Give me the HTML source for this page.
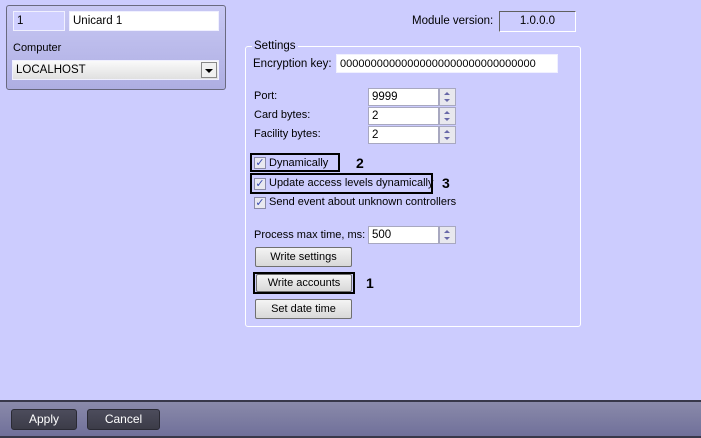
<!DOCTYPE html>
<html><head><style>
body{margin:0;width:701px;height:438px;background:#ccccfe;font-family:"Liberation Sans",sans-serif;font-size:11px;color:#000;position:relative;overflow:hidden}
div,span{position:absolute;box-sizing:border-box}
.t{white-space:nowrap}
.in{background:#fff;border:1px solid #a8a8c0;padding:0 3px;font-size:11.5px;white-space:nowrap;overflow:hidden;display:flex;align-items:center}
.spin{width:17px;background:#e8e8ee;border:1px solid #a8a8c0}
.spin:before{content:"";position:absolute;left:4px;top:3px;border:3px solid transparent;border-bottom:3px solid #6868a8;border-top:0}
.spin:after{content:"";position:absolute;left:4px;bottom:3px;border:3px solid transparent;border-top:3px solid #6868a8;border-bottom:0}
.btn{background:linear-gradient(#f4f4f4,#d8d8d8);border:1px solid #707070;border-radius:2px;text-align:center;font-size:11px;line-height:18px}
.cb{width:12px;height:12px;border:1px solid #8a8aa8;background:#e8e8f0;color:#3a4ab0;font-size:11px;line-height:10px;text-align:center}
.box{border:2px solid #000}
.num{font-size:14px;font-weight:bold}
.bb{background:linear-gradient(#4c4c5c,#3c3c48);color:#fff;border:1px solid #2a2a34;border-radius:3px;text-align:center;line-height:19px;font-size:12px}
</style></head><body>
<div style="left:6px;top:5px;width:220px;height:85px;border:1px solid #6a6a80;border-radius:3px;background:linear-gradient(#c8c8f4,#aeaee2)"></div>
<div class="in" style="left:13px;top:11px;width:52px;height:20px;background:#d0d0ff;border-color:#f0f0ff">1</div>
<div class="in" style="left:69px;top:11px;width:150px;height:20px;border-color:#f0f0ff">Unicard 1</div>
<span class="t" style="left:13px;top:42px">Computer</span>
<div class="in" style="left:12px;top:60px;width:207px;height:20px;background:linear-gradient(#fafafa,#e0e0e0);border-color:#f0f0ff">LOCALHOST</div>
<div style="left:201px;top:62px;width:16px;height:16px;background:#f0f0f0;border:1px solid #888"><span style="left:3px;top:6px;border:4px solid transparent;border-top:4px solid #000;border-bottom:0"></span></div>

<span class="t" style="left:412px;top:15px;font-size:11.5px">Module version:</span>
<div style="left:499px;top:11px;width:77px;height:21px;border:1px solid;border-color:#606060 #fff #fff #606060;text-align:center;line-height:19px;font-size:11.5px">1.0.0.0</div>

<div style="left:245px;top:46px;width:336px;height:281px;border:1px solid #fff;border-radius:3px"></div>
<span class="t" style="left:252px;top:40px;background:#ccccfe;padding:0 2px;font-size:11.5px">Settings</span>
<span class="t" style="left:253px;top:58px;font-size:11.5px">Encryption key:</span>
<div class="in" style="left:336px;top:54px;width:222px;height:19px;border-color:#f0f0ff;font-size:11px">00000000000000000000000000000000</div>
<span class="t" style="left:254px;top:90px">Port:</span>
<div class="in" style="left:368px;top:88px;width:71px;height:18px">9999</div><div class="spin" style="left:439px;top:88px;height:18px"></div>
<span class="t" style="left:254px;top:109px">Card bytes:</span>
<div class="in" style="left:368px;top:107px;width:71px;height:18px">2</div><div class="spin" style="left:439px;top:107px;height:18px"></div>
<span class="t" style="left:254px;top:128px">Facility bytes:</span>
<div class="in" style="left:368px;top:126px;width:71px;height:18px">2</div><div class="spin" style="left:439px;top:126px;height:18px"></div>

<div class="box" style="left:250px;top:153px;width:90px;height:19px"></div>
<div class="cb" style="left:254px;top:157px">✓</div><span class="t" style="left:269px;top:157px">Dynamically</span>
<span class="num" style="left:356px;top:155px">2</span>
<div class="box" style="left:250px;top:173px;width:183px;height:21px"></div>
<div class="cb" style="left:254px;top:178px">✓</div><span class="t" style="left:269px;top:177px;font-size:11px">Update access levels dynamically</span>
<span class="num" style="left:442px;top:175px">3</span>
<div class="cb" style="left:254px;top:197px">✓</div><span class="t" style="left:269px;top:196px;font-size:11px">Send event about unknown controllers</span>

<span class="t" style="left:254px;top:229px;font-size:11px">Process max time, ms:</span>
<div class="in" style="left:368px;top:226px;width:71px;height:18px">500</div><div class="spin" style="left:439px;top:226px;height:18px"></div>
<div class="btn" style="left:255px;top:247px;width:97px;height:20px">Write settings</div>
<div class="box" style="left:253px;top:272px;width:102px;height:22px"></div>
<div class="btn" style="left:256px;top:274px;width:96px;height:18px;line-height:16px">Write accounts</div>
<span class="num" style="left:366px;top:275px">1</span>
<div class="btn" style="left:255px;top:299px;width:97px;height:20px">Set date time</div>

<div style="left:0;top:400px;width:701px;height:38px;border-top:2px solid #38384a;background:linear-gradient(#8a8aaa,#70709a);border-bottom:2px solid #38384a"></div>
<div class="bb" style="left:11px;top:409px;width:66px;height:21px">Apply</div>
<div class="bb" style="left:87px;top:409px;width:73px;height:21px">Cancel</div>
</body></html>
